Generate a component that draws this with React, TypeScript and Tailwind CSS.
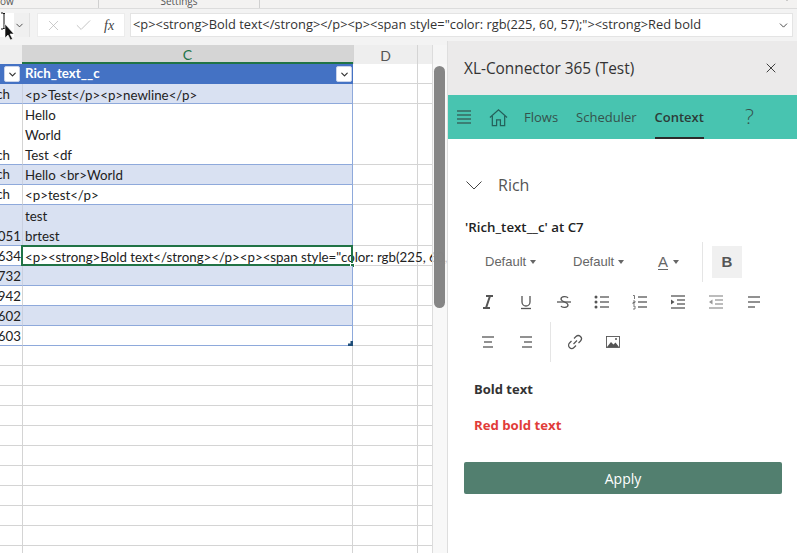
import React from 'react';
import { ChevronDown, X, Check } from 'lucide-react';

interface SheetRow {
  h: string;
  band: boolean;
  left: string;
  lines: string[];
  tight?: boolean;
}

const rows: SheetRow[] = [
  { h: 'h-[20px]', band: true, left: 'ch', lines: ['<p>Test</p><p>newline</p>'] },
  { h: 'h-[61px]', band: false, left: 'ch', lines: ['Hello', 'World', 'Test <df'] },
  { h: 'h-[20px]', band: true, left: 'ch', lines: ['Hello <br>World'], tight: true },
  { h: 'h-[20px]', band: false, left: 'ch', lines: ['<p>test</p>'], tight: true },
  { h: 'h-[41px]', band: true, left: '051', lines: ['test', 'brtest'] },
  { h: 'h-[20px]', band: false, left: '634', lines: ['<p><strong>Bold text</strong></p><p><span style="color: rgb(225, 60, 57);"><strong>Red bold'] },
  { h: 'h-[20px]', band: true, left: '732', lines: [] },
  { h: 'h-[20px]', band: false, left: '942', lines: [] },
  { h: 'h-[20px]', band: true, left: '602', lines: [] },
  { h: 'h-[20px]', band: false, left: '603', lines: [] },
];

const emptyRows = Array.from({ length: 11 }, (_, i) => i);

function FilterButton() {
  return (
    <span className="w-[16px] h-[16px] bg-white border border-[#c9d3ea] rounded-[2px] flex items-center justify-center">
      <ChevronDown className="w-[11px] h-[11px] text-[#333]" strokeWidth={2.6} />
    </span>
  );
}

function Caret() {
  return <i className="w-0 h-0 border-x-[3px] border-x-transparent border-t-[4px] border-t-[#666]" />;
}

function ToolIcon({ children }: { children: React.ReactNode }) {
  return (
    <button className="w-[38px] h-[40px] flex items-center justify-center text-[#555]">
      <svg viewBox="0 0 18 18" className="w-[18px] h-[18px]" fill="none" stroke="currentColor" strokeWidth="1.3">
        {children}
      </svg>
    </button>
  );
}

function Lines({ ys, xs }: { ys: number[]; xs: [number, number][] }) {
  return (
    <>
      {ys.map((y, i) => (
        <line key={y} x1={xs[i][0]} x2={xs[i][1]} y1={y} y2={y} />
      ))}
    </>
  );
}

function FormulaBar() {
  return (
    <div className="h-[32px] bg-[#f3f3f3] flex items-center gap-[5px] pr-[4px] shrink-0">
      <div className="relative w-[30px] h-[24px] bg-[#f0f0f0] border-r border-[#e2e2e2] flex items-center justify-end pr-[4px] shrink-0">
        <span className="absolute left-0 top-0 bottom-0 w-[14px] bg-white" />
        <ChevronDown className="w-[11px] h-[11px] text-[#444]" strokeWidth={2} />
      </div>
      <div className="ml-[2px] w-[88px] h-[24px] bg-white border border-[#ececec] flex items-center text-[#b5b5b5] shrink-0">
        <X className="ml-[7px] w-[17px] h-[17px]" strokeWidth={1} />
        <Check className="ml-[12px] w-[19px] h-[19px]" strokeWidth={1} />
        <span className="ml-[11px] text-[14px] italic text-[#444] font-['Liberation_Serif',serif]">fx</span>
      </div>
      <div className="flex-1 h-[24px] bg-white border border-[#e4e4e4] flex items-center pl-[2px] pr-[2px] text-[12.85px] text-[#333] font-['Open_Sans',sans-serif] whitespace-nowrap">
        <span className="flex-1">{'<p><strong>Bold text</strong></p><p><span style="color: rgb(225, 60, 57);"><strong>Red bold'}</span>
        <ChevronDown className="w-[13px] h-[13px] text-[#333]" strokeWidth={1.6} />
      </div>
    </div>
  );
}

function Sheet() {
  return (
    <div className="relative w-[448px] h-full shrink-0 overflow-hidden bg-white font-['Lato',sans-serif] text-[13.3px] text-[#222]">
      <div className="h-[4px] bg-[#f3f3f3]" />
      {/* column letters */}
      <div className="flex h-[19px] bg-[#eeeeee] text-[14px]">
        <div className="w-[22px] shrink-0" />
        <div className="w-[331px] shrink-0 bg-[#d5d5d5] border-b-2 border-[#217346] text-[#217346] flex items-center justify-center pt-[1px]">C</div>
        <div className="w-[64px] shrink-0 border-l border-[#d4d4d4] text-[#555] flex items-center justify-center pt-[1px]">D</div>
        <div className="w-[15px] shrink-0 border-l border-[#d4d4d4]" />
      </div>
      {/* table header */}
      <div className="flex h-[20px]">
        <div className="w-[22px] shrink-0 bg-[#4472c4] flex items-center justify-end pr-[2px]"><FilterButton /></div>
        <div className="w-[331px] shrink-0 bg-[#4472c4] text-white font-bold flex items-center justify-between pl-[3px] pr-[1px]">
          <span>Rich_text__c</span>
          <FilterButton />
        </div>
        <div className="w-[64px] shrink-0 border-b border-[#d4d4d4]" />
        <div className="w-[16px] shrink-0 border-l border-b border-[#d4d4d4]" />
      </div>
      {rows.map((r, i) => (
        <div key={i} className={`flex ${r.h}`}>
          <div className={`w-[23px] shrink-0 border-r border-b flex items-end justify-end leading-[18px] overflow-hidden whitespace-nowrap ${r.left === 'ch' ? 'pr-[12px]' : 'pr-[1px]'} ${r.tight ? 'pb-[1px]' : ''} ${r.band ? 'bg-[#d9e1f2] border-r-[#c9d0e0] border-b-[#8ea9db]' : 'border-r-[#d4d4d4] border-b-[#8ea9db]'}`}>
            {r.left}
          </div>
          <div className={`relative w-[330px] shrink-0 border-r border-b border-[#8ea9db] pl-[2px] leading-[20px] whitespace-nowrap ${r.tight ? '' : 'pt-[1px]'} ${r.band ? 'bg-[#d9e1f2]' : ''}`}>
            {r.lines.map((l) => (
              <div key={l}>{l}</div>
            ))}
            {i === 5 && (
              <>
                <span className="absolute left-[-2px] right-[-1px] top-[-1px] bottom-[-1px] border-2 border-[#217346]" />
                <span className="absolute right-[-3px] bottom-[-3px] w-[5px] h-[5px] bg-[#217346] border border-white" />
              </>
            )}
            {i === 9 && <span className="absolute right-[-1px] bottom-[-1px] w-[5px] h-[5px] bg-[#1f4e79] [clip-path:polygon(100%_0,100%_100%,0_100%,0_50%,50%_50%,50%_0)]" />}
          </div>
          <div className="w-[64px] shrink-0 border-b border-[#d4d4d4]" />
          <div className="w-[16px] shrink-0 border-l border-b border-[#d4d4d4]" />
        </div>
      ))}
      {emptyRows.map((i) => (
        <div key={i} className="flex h-[20px]">
          <div className="w-[23px] shrink-0 border-r border-b border-[#d4d4d4]" />
          <div className="w-[330px] shrink-0 border-r border-b border-[#d4d4d4]" />
          <div className="w-[64px] shrink-0 border-b border-[#d4d4d4]" />
          <div className="w-[16px] shrink-0 border-l border-b border-[#d4d4d4]" />
        </div>
      ))}
      {/* scrollbar */}
      <div className="absolute right-0 top-[4px] bottom-0 w-[16px] bg-[#f6f6f6]/80 border-l border-[#dcdcdc]" />
      <div className="absolute left-[434px] top-[25px] w-[11px] h-[242px] rounded-[6px] bg-[#808080]/95" />
      <div className="absolute right-0 top-0 bottom-0 w-px bg-[#dedede]" />
    </div>
  );
}

function Panel() {
  return (
    <div className="flex-1 min-w-0 h-full bg-white flex flex-col font-['Open_Sans',sans-serif] text-[#333]">
      <div className="h-[54px] bg-[#ebeaea] flex items-center justify-between pl-[16px] pr-[18px] text-[15.4px] font-medium text-[#333] shrink-0">
        <span className="pt-[2px]">XL-Connector 365 (Test)</span>
        <X className="w-[16px] h-[16px] text-[#333]" strokeWidth={1.4} />
      </div>
      <div className="h-[44px] bg-[#48c4b0] flex items-center text-[13px] text-[#35524c] shrink-0">
        <svg viewBox="0 0 14 14" className="ml-[9px] w-[14px] h-[14px]" stroke="#2f3a38" strokeWidth="1">
          <line x1="0" x2="14" y1="1" y2="1" />
          <line x1="0" x2="14" y1="5" y2="5" />
          <line x1="0" x2="14" y1="9" y2="9" />
          <line x1="0" x2="14" y1="13" y2="13" />
        </svg>
        <svg viewBox="0 0 20 20" className="ml-[18px] w-[19px] h-[19px]" fill="none" stroke="#24605a" strokeWidth="1.3">
          <path d="M1 10 10 2l9 8" />
          <path d="M3.500 8.500V18.500H8V12.500H12V18.500H16.500V8.500" />
        </svg>
        <span className="ml-[16px] pt-[2px]">Flows</span>
        <span className="ml-[18px] pt-[2px]">Scheduler</span>
        <span className="ml-[18px] h-full flex items-center font-semibold text-[#2d3b38] border-b-2 border-[#2b2b2b] pt-[4px]">Context</span>
        <span className="ml-[41px] text-[21px] font-light text-[#35524c]">?</span>
      </div>
      <div className="flex-1 px-[16px]">
        <div className="mt-[34px] flex items-center text-[#555] h-[24px]">
          <svg viewBox="0 0 16 9" className="ml-[2px] w-[16px] h-[9px]" fill="none" stroke="#444" strokeWidth="1">
            <path d="M.5.500 8 8l7.500-7.500" />
          </svg>
          <span className="ml-[16px] text-[16px]">Rich</span>
        </div>
        <div className="mt-[21px] ml-[1px] h-[18px] text-[13.3px] font-semibold text-[#222] leading-[18px]">'Rich_text__c' at C7</div>
        <div className="mt-[6px] ml-[5px] flex items-center h-[40px] text-[13px] text-[#666] font-['Liberation_Sans',sans-serif]">
          <span className="ml-[16px] w-[88px] flex items-center gap-[4px]">Default <Caret /></span>
          <span className="w-[85px] flex items-center gap-[4px]">Default <Caret /></span>
          <span className="w-[44px] flex items-center gap-[5px]"><span className="underline underline-offset-2 text-[15px]">A</span> <Caret /></span>
          <span className="w-px h-[40px] bg-[#e5e5e5]" />
          <span className="ml-[9px] w-[30px] h-[32px] bg-[#f0f0f0] flex items-center justify-center text-[15px] font-bold text-[#555]">B</span>
        </div>
        <div className="ml-[5px] flex h-[40px]">
          <ToolIcon><path d="M7 3h7M4 15h7M11 3 7 15" strokeWidth="2" /></ToolIcon>
          <ToolIcon><path d="M5 3v6a4 4 0 0 0 8 0V3" /><line x1="4" x2="14" y1="15.500" y2="15.500" /></ToolIcon>
          <ToolIcon><path d="M13 5c-1-2-7-2-7 1 0 3 7 3 7 6 0 3-6 3-7 1" /><line x1="2" x2="16" y1="9" y2="9" /></ToolIcon>
          <ToolIcon>
            <Lines ys={[4, 9, 14]} xs={[[7, 16], [7, 16], [7, 16]]} />
            <g fill="currentColor" stroke="none"><circle cx="3" cy="4" r="1.500" /><circle cx="3" cy="9" r="1.500" /><circle cx="3" cy="14" r="1.500" /></g>
          </ToolIcon>
          <ToolIcon>
            <Lines ys={[4, 9, 14]} xs={[[7, 16], [7, 16], [7, 16]]} />
            <path d="M2 2.500h1.500V6M2 8h2v1.500H2V11h2M2 13h2v3H2" strokeWidth="0.8" />
          </ToolIcon>
          <ToolIcon>
            <Lines ys={[3, 7, 11, 15]} xs={[[2, 16], [8, 16], [8, 16], [2, 16]]} />
            <path d="M2 6.500 5.500 9 2 11.500z" fill="currentColor" stroke="none" />
          </ToolIcon>
          <ToolIcon>
            <g opacity="0.6">
              <Lines ys={[3, 7, 11, 15]} xs={[[2, 16], [8, 16], [8, 16], [2, 16]]} />
              <path d="M5.500 6.500 2 9l3.500 2.500z" fill="currentColor" stroke="none" />
            </g>
          </ToolIcon>
          <ToolIcon><Lines ys={[4, 9, 14]} xs={[[3, 15], [3, 15], [3, 10]]} /></ToolIcon>
        </div>
        <div className="ml-[5px] flex items-center h-[40px]">
          <ToolIcon><Lines ys={[4, 9, 14]} xs={[[3, 15], [5, 13], [4, 14]]} /></ToolIcon>
          <ToolIcon><Lines ys={[4, 9, 14]} xs={[[3, 15], [7, 15], [5, 15]]} /></ToolIcon>
          <span className="mx-[5px] w-px h-[40px] bg-[#e5e5e5]" />
          <ToolIcon>
            <path d="M7.500 11 11 7.500M8 5.500l2-2a3 3 0 0 1 4.500 4.500l-2 2M10 12.500l-2 2A3 3 0 0 1 3.500 10l2-2" strokeWidth="1.200" />
          </ToolIcon>
          <ToolIcon>
            <rect x="2.500" y="3.500" width="13" height="11" strokeWidth="0.9" />
            <path d="M3 14l4-5 2.500 2.500L11.500 9.500 15 14z" fill="currentColor" stroke="none" />
            <circle cx="12" cy="6" r="1" fill="currentColor" stroke="none" />
          </ToolIcon>
        </div>
        <p className="mt-[18px] ml-[10px] text-[13px] font-bold text-[#333] leading-[18px]">Bold text</p>
        <p className="mt-[18px] ml-[10px] text-[13.2px] font-bold text-[#e13c39] leading-[18px]">Red bold text</p>
        <button className="mt-[28px] w-[318px] h-[32px] rounded-[2px] bg-[#527f6f] text-white text-[14px] font-medium">Apply</button>
      </div>
    </div>
  );
}

export default function App() {
  return (
    <div className="relative w-[797px] h-[553px] overflow-hidden bg-white flex flex-col">
      {/* ribbon bottom edge */}
      <div className="relative h-[9px] bg-[#f3f2f1] border-b border-[#dcdcdc] overflow-hidden text-[10px] text-[#555] font-['Open_Sans',sans-serif] leading-[9px] flex shrink-0">
        <div className="w-[99px] border-r border-[#d0d0d0]"><span className="block -mt-[3px]">ow</span></div>
        <div className="w-[161px] border-r border-[#d0d0d0] text-center"><span className="block -mt-[3px]">Settings</span></div>
        <ChevronDown className="absolute left-[782px] top-[-6px] w-[10px] h-[10px] text-[#333]" strokeWidth={2} />
      </div>
      <FormulaBar />
      <div className="flex flex-1 min-h-0">
        <Sheet />
        <Panel />
      </div>
      {/* mouse cursor over the name box */}
      <svg viewBox="0 0 14 28" className="absolute left-0 top-[12px] w-[14px] h-[28px]">
        <path d="M1 1h2l1 1 1-1h0M4 2v14M1 17h2l1-1 1 1" fill="none" stroke="#111" strokeWidth="1" />
        <path d="M5 12v14l3-3 2.500 5 2-1-2.500-5h4z" fill="#111" stroke="#fff" strokeWidth="0.6" />
      </svg>
    </div>
  );
}
